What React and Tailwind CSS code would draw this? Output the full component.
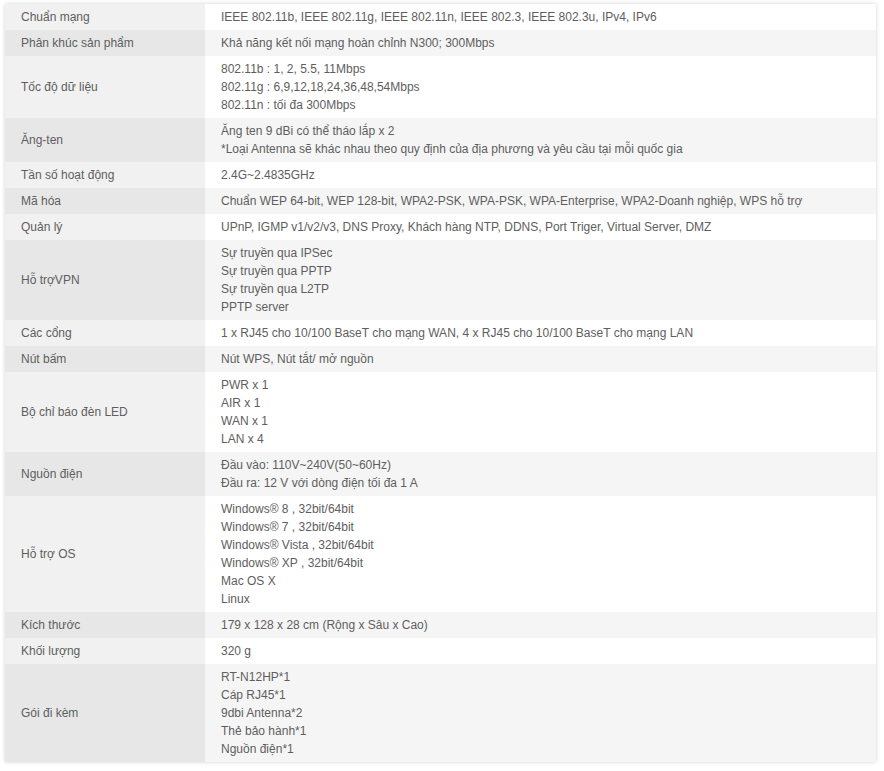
const specs = [
  ['Chuẩn mạng', ['IEEE 802.11b, IEEE 802.11g, IEEE 802.11n, IEEE 802.3, IEEE 802.3u, IPv4, IPv6']],
  ['Phân khúc sản phẩm', ['Khả năng kết nối mạng hoàn chỉnh N300; 300Mbps']],
  ['Tốc độ dữ liệu', ['802.11b : 1, 2, 5.5, 11Mbps', '802.11g : 6,9,12,18,24,36,48,54Mbps', '802.11n : tối đa 300Mbps']],
  ['Ăng-ten', ['Ăng ten 9 dBi có thể tháo lắp x 2', '*Loại Antenna sẽ khác nhau theo quy định của địa phương và yêu cầu tại mỗi quốc gia']],
  ['Tần số hoạt động', ['2.4G~2.4835GHz']],
  ['Mã hóa', ['Chuẩn WEP 64-bit, WEP 128-bit, WPA2-PSK, WPA-PSK, WPA-Enterprise, WPA2-Doanh nghiệp, WPS hỗ trợ']],
  ['Quản lý', ['UPnP, IGMP v1/v2/v3, DNS Proxy, Khách hàng NTP, DDNS, Port Triger, Virtual Server, DMZ']],
  ['Hỗ trợVPN', ['Sự truyền qua IPSec', 'Sự truyền qua PPTP', 'Sự truyền qua L2TP', 'PPTP server']],
  ['Các cổng', ['1 x RJ45 cho 10/100 BaseT cho mạng WAN, 4 x RJ45 cho 10/100 BaseT cho mạng LAN']],
  ['Nút bấm', ['Nút WPS, Nút tắt/ mở nguồn']],
  ['Bộ chỉ báo đèn LED', ['PWR x 1', 'AIR x 1', 'WAN x 1', 'LAN x 4']],
  ['Nguồn điện', ['Đầu vào: 110V~240V(50~60Hz)', 'Đầu ra: 12 V với dòng điện tối đa 1 A']],
  ['Hỗ trợ OS', ['Windows® 8 , 32bit/64bit', 'Windows® 7 , 32bit/64bit', 'Windows® Vista , 32bit/64bit', 'Windows® XP , 32bit/64bit', 'Mac OS X', 'Linux']],
  ['Kích thước', ['179 x 128 x 28 cm (Rộng x Sâu x Cao)']],
  ['Khối lượng', ['320 g']],
  ['Gói đi kèm', ['RT-N12HP*1', 'Cáp RJ45*1', '9dbi Antenna*2', 'Thẻ bảo hành*1', 'Nguồn điện*1']],
];

export default function App() {
  return (
    <div className="min-h-screen bg-white pl-[5px] pt-[4px] font-['Liberation_Sans',Arial,sans-serif] text-[12px] leading-[18px] text-[#5e5e5e]">
      <div className="w-[871px] shadow-[0_0_4px_rgba(0,0,0,0.18)]">
        {specs.map(([label, lines], i) => {
          const even = i % 2 === 1;
          return (
            <div key={label} className="flex">
              <div
                className={`flex w-[200px] shrink-0 items-center px-4 py-[4px] ${even ? 'bg-[#e7e7e7]' : 'bg-[#f1f1f1]'}`}
              >
                {label}
              </div>
              <div className={`flex-1 px-4 py-[4px] ${even ? 'bg-[#f5f5f5]' : 'bg-white'}`}>
                {lines.map((line) => (
                  <div key={line}>{line}</div>
                ))}
              </div>
            </div>
          );
        })}
      </div>
    </div>
  );
}
